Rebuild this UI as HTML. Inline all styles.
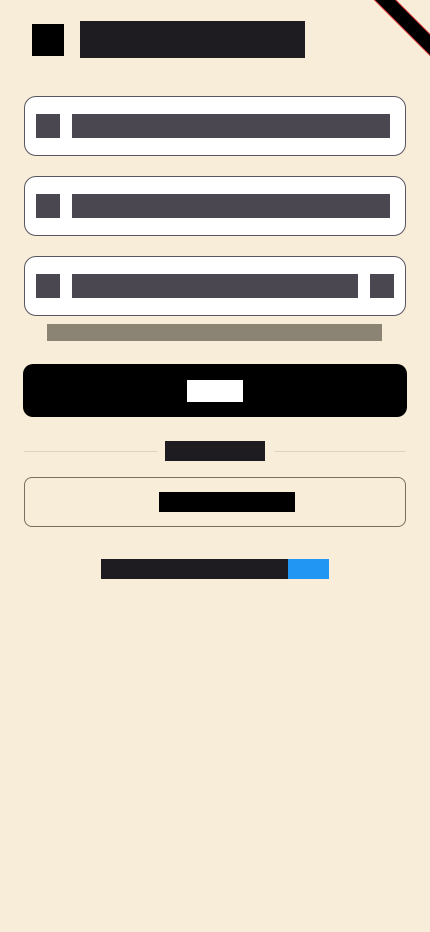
<!DOCTYPE html>
<html><head><meta charset="utf-8"><style>
html,body{margin:0;padding:0;width:430px;height:932px;overflow:hidden;background:#f7edd8;position:relative;font-family:"Liberation Sans",sans-serif}
div{position:absolute;box-sizing:border-box}
.f{left:24px;width:382px;height:60px;background:#fff;border:1px solid #5a5560;border-radius:12px}
.ic{width:24px;height:24px;background:#4a4750}
.tx{height:24px;background:#4a4750}
</style></head><body>
<div style="left:375px;top:-20px;width:120px;height:14px;background:#000;transform:rotate(45deg);transform-origin:0 0;box-shadow:0 0 0 1px #d33"></div>
<div style="left:32px;top:24px;width:32px;height:32px;background:#000"></div>
<div style="left:80px;top:21px;width:225px;height:37px;background:#1e1c21"></div>

<div class="f" style="top:96px"><div class="ic" style="left:11px;top:17px"></div><div class="tx" style="left:47px;top:17px;width:318px"></div></div>
<div class="f" style="top:176px"><div class="ic" style="left:11px;top:17px"></div><div class="tx" style="left:47px;top:17px;width:318px"></div></div>
<div class="f" style="top:256px"><div class="ic" style="left:11px;top:17px"></div><div class="tx" style="left:47px;top:17px;width:286px"></div><div class="ic" style="left:345px;top:17px"></div></div>
<div style="left:47px;top:324px;width:335px;height:17px;background:#8b8475"></div>

<div style="left:23px;top:364px;width:384px;height:53px;background:#000;border-radius:10px"></div>
<div style="left:187px;top:380px;width:56px;height:22px;background:#fff"></div>

<div style="left:24px;top:451px;width:133px;height:1px;background:#ddd3c0"></div>
<div style="left:274px;top:451px;width:132px;height:1px;background:#ddd3c0"></div>
<div style="left:165px;top:441px;width:100px;height:20px;background:#1e1c21"></div>

<div style="left:24px;top:477px;width:382px;height:50px;border:1.5px solid #7a6f60;border-radius:8px"></div>
<div style="left:159px;top:492px;width:136px;height:20px;background:#000"></div>

<div style="left:101px;top:559px;width:187px;height:20px;background:#1e1c21"></div>
<div style="left:288px;top:559px;width:41px;height:20px;background:#2196f3"></div>
</body></html>
